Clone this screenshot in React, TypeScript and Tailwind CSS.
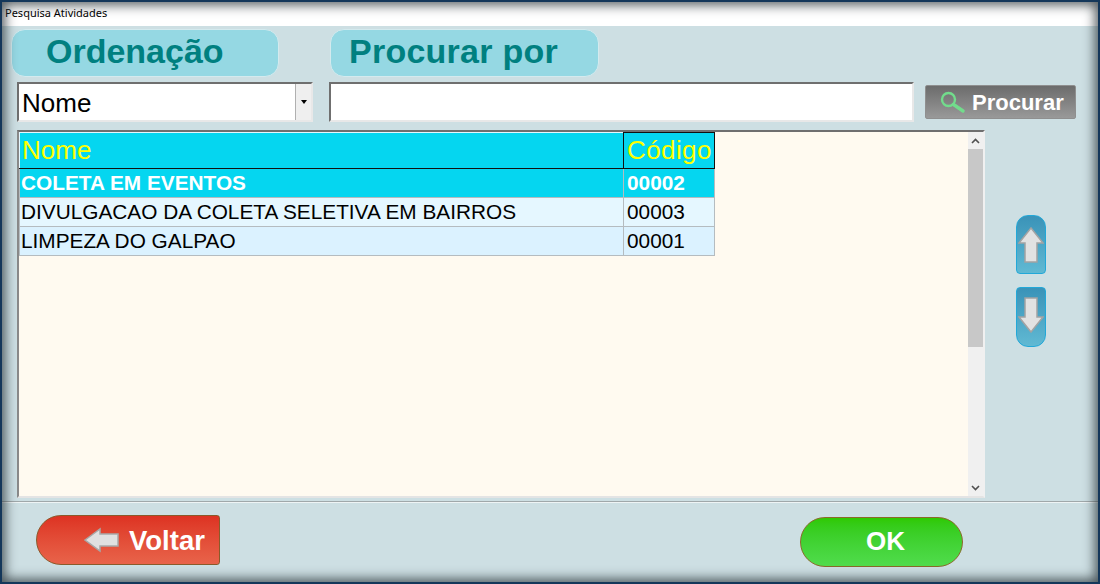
const rows = [
  { nome: 'COLETA EM EVENTOS', codigo: '00002', cls: 'bg-[#05d6f0] text-white font-bold' },
  { nome: 'DIVULGACAO DA COLETA SELETIVA EM BAIRROS', codigo: '00003', cls: 'bg-[#e5f7ff] text-black' },
  { nome: 'LIMPEZA DO GALPAO', codigo: '00001', cls: 'bg-[#dbf2ff] text-black' },
];

function Arrow({ dir }: { dir: 'up' | 'down' }) {
  const rotate = dir === 'up' ? 0 : 180;
  return (
    <svg width="26" height="36" viewBox="0 0 26 36" style={{ transform: `rotate(${rotate}deg)` }}>
      <path d="M13 1 L25 16 H19 V35 H7 V16 H1 Z" fill="#e2e2e2" stroke="#a3a3a3" strokeWidth="1.5" />
    </svg>
  );
}

function ScrollChevron({ up }: { up?: boolean }) {
  return (
    <svg width="9" height="6" viewBox="0 0 9 6" className={up ? '' : 'rotate-180'}>
      <path d="M1 5 L4.5 1.5 L8 5" fill="none" stroke="#505050" strokeWidth="1.6" />
    </svg>
  );
}

export default function App() {
  return (
    <div className="relative w-[1100px] h-[584px] overflow-hidden bg-[#cddfe3] font-['Liberation_Sans',Arial,sans-serif]">
      {/* Title bar */}
      <div className="h-[26px] bg-white pl-[5px] pt-[5px] text-[11px] leading-[15px] text-black font-['Noto_Sans',sans-serif]">
        Pesquisa Atividades
      </div>

      {/* Headings */}
      <div className="flex gap-[51px] pl-[11px] pt-[3px]">
        <div className="w-[268px] h-[48px] pl-[34px] rounded-[14px] border border-[#d4eaee] bg-[#95d8e3] text-[34px] leading-[43px] font-bold text-[#008080]">
          Ordenação
        </div>
        <div className="w-[269px] h-[48px] pl-[18px] rounded-[14px] border border-[#d4eaee] bg-[#95d8e3] text-[34px] leading-[43px] font-bold tracking-[0.25px] text-[#008080]">
          Procurar por
        </div>
      </div>

      {/* Search row */}
      <div className="flex items-center pl-[17px] pt-[5px]">
        <div className="flex w-[296px] h-[40px] border-2 border-t-[#6f6f6f] border-l-[#6f6f6f] border-r-[#e8e8e8] border-b-[#e8e8e8] bg-white">
          <div className="flex-1 pl-[3px] text-[26px] leading-[38px] text-black">Nome</div>
          <div className="flex w-[16px] items-center justify-center border-l border-[#b0b0b0] bg-[#efefef]">
            <span className="w-0 h-0 border-x-[3px] border-x-transparent border-t-[4px] border-t-black" />
          </div>
        </div>
        <div className="ml-[16px] w-[585px] h-[40px] border-2 border-t-[#6f6f6f] border-l-[#6f6f6f] border-r-[#e8e8e8] border-b-[#e8e8e8] bg-white" />
        <div className="ml-[11px] flex w-[151px] h-[34px] items-center rounded-[2px] border border-[#8f8f8f] bg-gradient-to-b from-[#6c6c6c] to-[#999999] pl-[14px]">
          <svg width="28" height="24" viewBox="0 0 28 24" fill="none">
            <circle cx="8.5" cy="9.5" r="6.5" stroke="#72dc8c" strokeWidth="2.4" />
            <path d="M13.5 14.5 L23 21" stroke="#72dc8c" strokeWidth="3.4" strokeLinecap="round" />
          </svg>
          <span className="ml-[4px] text-[22px] font-bold text-white">Procurar</span>
        </div>
      </div>

      {/* Grid and scroll arrows */}
      <div className="flex pl-[17px] pt-[8px]">
        <div className="flex w-[968px] h-[368px] border-2 border-t-[#6f6f6f] border-l-[#8a8a8a] border-r-[#f0f0f0] border-b-[#e4e4e4] bg-[#fffaf0]">
          <div className="flex-1">
            <table className="w-[696px] table-fixed border-collapse">
              <thead>
                <tr className="h-[36px] bg-[#05d6f0] text-[26px] leading-[30px] text-[#ffff00]">
                  <th className="w-[604px] border border-[#111111] border-l-[#e5f7ff] border-t-[#e5f7ff] pl-[2px] pb-[2px] text-left font-normal">Nome</th>
                  <th className="border border-[#111111] pl-[3px] pb-[2px] text-left font-normal tracking-[0.4px]">Código</th>
                </tr>
              </thead>
              <tbody>
                {rows.map((r) => (
                  <tr key={r.codigo} className={`h-[29px] text-[20.8px] ${r.cls}`}>
                    <td className="border border-[#b5bcc0] pl-[1px] leading-[22px]">{r.nome}</td>
                    <td className="border border-[#b5bcc0] pl-[3px] leading-[22px]">{r.codigo}</td>
                  </tr>
                ))}
              </tbody>
            </table>
          </div>
          <div className="flex w-[15px] flex-col bg-[#f0f0f0]">
            <div className="flex h-[17px] items-center justify-center"><ScrollChevron up /></div>
            <div className="h-[198px] bg-[#c8c8c8]" />
            <div className="flex-1" />
            <div className="flex h-[17px] items-center justify-center"><ScrollChevron /></div>
          </div>
        </div>

        <div className="ml-[31px] flex flex-col gap-[13px] pt-[85px]">
          <div className="flex w-[30px] h-[59px] items-center justify-center rounded-t-[12px] rounded-b-[4px] border border-[#22a8d8] bg-gradient-to-b from-[#3a93b8] to-[#60b9d3]">
            <Arrow dir="up" />
          </div>
          <div className="flex w-[30px] h-[60px] items-center justify-center pb-[4px] rounded-b-[12px] rounded-t-[4px] border border-[#22a8d8] bg-gradient-to-b from-[#3a93b8] to-[#60b9d3]">
            <Arrow dir="down" />
          </div>
        </div>
      </div>

      {/* Footer */}
      <div className="mt-[3px] flex items-start border-t border-t-[#a0a8aa] shadow-[inset_0_1px_0_#eef4f5] pl-[36px] pt-[13px]">
        <div className="flex w-[184px] h-[50px] items-center rounded-l-[26px] rounded-r-[3px] border border-[#8a5a2a] bg-gradient-to-b from-[#dd3222] to-[#e8634a] pl-[47px]">
          <svg width="36" height="26" viewBox="0 0 36 26">
            <path d="M1 13 L16 2 V7 H34 V19 H16 V24 Z" fill="#e0e0e0" stroke="#a8a8a8" strokeWidth="1.5" />
          </svg>
          <span className="ml-[9px] pt-[2px] text-[27.5px] font-bold text-white">Voltar</span>
        </div>
        <div className="ml-[580px] mt-[2px] flex w-[163px] h-[50px] items-center justify-center pl-[8px] pb-[2px] rounded-[25px] border border-[#8a6a2a] bg-gradient-to-b from-[#2fc900] to-[#50dc4c] text-[26px] font-bold text-white">
          OK
        </div>
      </div>

      {/* Window frame shading */}
      <div className="absolute inset-0 pointer-events-none border-2 border-[#14375a] shadow-[inset_0_0_12px_3px_rgba(40,50,55,0.8)]" />
    </div>
  );
}
